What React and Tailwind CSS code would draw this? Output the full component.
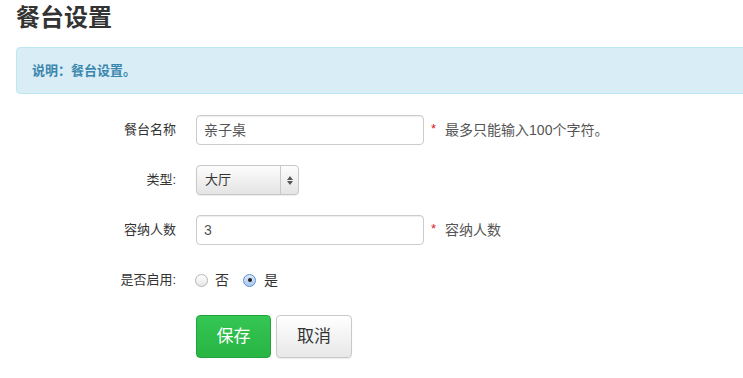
import React from "react";

const FONT = { fontFamily: '"Helvetica Neue", "Liberation Sans", "Noto Sans CJK SC", sans-serif' };

function Label({ children }) {
  return <div className="w-[160px] shrink-0 text-right text-[13px] text-[#333] pr-0">{children}</div>;
}

function Radio({ checked }) {
  return (
    <span
      className={`inline-flex items-center justify-center w-[13px] h-[13px] rounded-full border ${
        checked
          ? "border-[#5b8fd0] bg-gradient-to-b from-[#dbe9fb] to-[#a9c8f0]"
          : "border-[#b5b5b5] bg-gradient-to-b from-[#ffffff] to-[#e6e6e6]"
      }`}
    >
      {checked && <span className="w-[4px] h-[4px] rounded-full bg-[#222]" />}
    </span>
  );
}

export default function App() {
  return (
    <div className="w-[743px] h-[378px] overflow-hidden bg-white" style={FONT}>
      <h1 className="pl-[16px] pt-[3px] text-[24px] leading-[30px] font-bold text-[#333]">餐台设置</h1>

      <div className="ml-[16px] mt-[14px] w-[760px] h-[47px] flex items-center pl-[15px] rounded-[4px] border border-[#bce8f1] bg-[#d9edf7] text-[13px] font-bold text-[#3a87ad]">
        说明：餐台设置。
      </div>

      <div className="mt-[21px] flex flex-col gap-[20px] pl-[16px]">
        <div className="flex items-center h-[30px]">
          <Label>餐台名称</Label>
          <div className="ml-[20px] w-[228px] h-[30px] rounded-[4px] border border-[#ccc] shadow-[inset_0_1px_1px_rgba(0,0,0,0.075)] flex items-center px-[7px] text-[14px] text-[#555]">
            亲子桌
          </div>
          <span className="ml-[7px] text-[#d21f1f] text-[13px] leading-none -mt-[4px]">*</span>
          <span className="ml-[9px] text-[14px] text-[#555]">最多只能输入100个字符。</span>
        </div>

        <div className="flex items-center h-[30px]">
          <Label>类型:</Label>
          <div className="ml-[20px] w-[103px] h-[30px] rounded-[4px] border border-[#c8c8c8] bg-gradient-to-b from-[#fdfdfd] to-[#e4e4e4] flex items-center text-[13px] text-[#333] shadow-[0_1px_1px_rgba(0,0,0,0.08)]">
            <span className="flex-1 pl-[8px]">大厅</span>
            <span className="w-[18px] h-full border-l border-[#c8c8c8] flex flex-col items-center justify-center gap-[1px]">
              <svg width="6" height="4" viewBox="0 0 6 4"><path d="M3 0L6 4H0Z" fill="#555" /></svg>
              <svg width="6" height="4" viewBox="0 0 6 4"><path d="M0 0H6L3 4Z" fill="#555" /></svg>
            </span>
          </div>
        </div>

        <div className="flex items-center h-[30px]">
          <Label>容纳人数</Label>
          <div className="ml-[20px] w-[228px] h-[30px] rounded-[4px] border border-[#ccc] shadow-[inset_0_1px_1px_rgba(0,0,0,0.075)] flex items-center px-[7px] text-[14px] text-[#555]">
            3
          </div>
          <span className="ml-[7px] text-[#d21f1f] text-[13px] leading-none -mt-[4px]">*</span>
          <span className="ml-[9px] text-[14px] text-[#555]">容纳人数</span>
        </div>

        <div className="flex items-center h-[30px]">
          <Label>是否启用:</Label>
          <div className="ml-[19px] flex items-center text-[14px] text-[#333]">
            <Radio />
            <span className="ml-[7px]">否</span>
            <span className="ml-[14px]" />
            <Radio checked />
            <span className="ml-[8px]">是</span>
          </div>
        </div>
      </div>

      <div className="mt-[20px] ml-[196px] flex gap-[5px]">
        <button className="w-[75px] h-[43px] rounded-[4px] border border-[#22a33a] bg-gradient-to-b from-[#35c653] to-[#27b443] text-white text-[17px]">
          保存
        </button>
        <button className="w-[76px] h-[43px] rounded-[4px] border border-[#c9c9c9] bg-gradient-to-b from-[#ffffff] to-[#e8e8e8] text-[#333] text-[17px] shadow-[0_1px_1px_rgba(0,0,0,0.08)]">
          取消
        </button>
      </div>
    </div>
  );
}
